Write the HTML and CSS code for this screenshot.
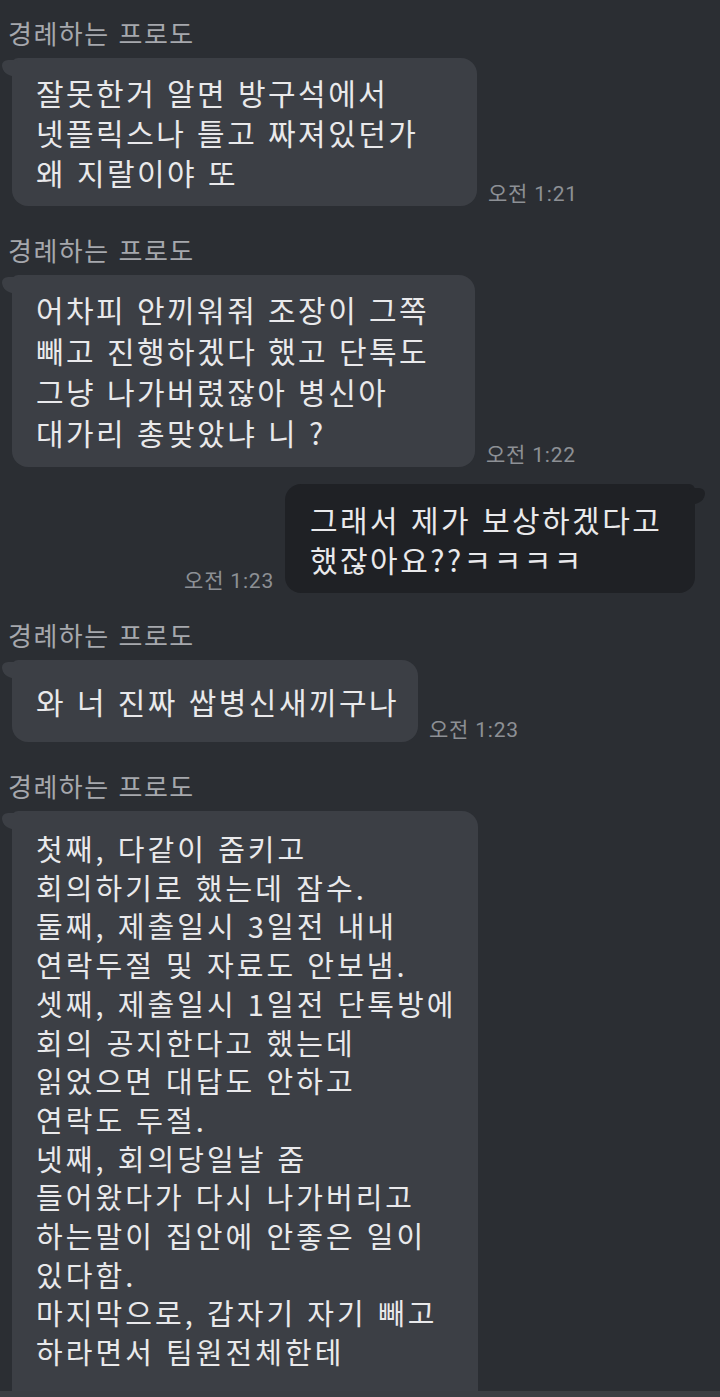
FILE: index.html
```html
<!DOCTYPE html>
<html lang="ko">
<head>
<meta charset="utf-8">
<title>채팅</title>
<link rel="stylesheet" href="styles.css">
</head>
<body>
<main class="chat">
  <section class="group first">
    <div class="name">경례하는 프로도</div>
    <div class="row">
      <div class="bubble recv w1">잘못한거 알면 방구석에서<br>넷플릭스나 틀고 짜져있던가<br>왜 지랄이야 또</div>
      <span class="time">오전 1:21</span>
    </div>
  </section>

  <section class="group">
    <div class="name">경례하는 프로도</div>
    <div class="row">
      <div class="bubble recv four w2">어차피 안끼워줘 조장이 그쪽<br>빼고 진행하겠다 했고 단톡도<br>그냥 나가버렸잖아 병신아<br>대가리 총맞았냐 니 ?</div>
      <span class="time">오전 1:22</span>
    </div>
  </section>

  <section class="group sent-group">
    <div class="row mine">
      <span class="time">오전 1:23</span>
      <div class="bubble sent">그래서 제가 보상하겠다고<br>했잖아요??ㅋㅋㅋㅋ</div>
    </div>
  </section>

  <section class="group">
    <div class="name">경례하는 프로도</div>
    <div class="row">
      <div class="bubble recv single w3">와 너 진짜 쌉병신새끼구나</div>
      <span class="time">오전 1:23</span>
    </div>
  </section>

  <section class="group last">
    <div class="name">경례하는 프로도</div>
    <div class="row">
      <div class="bubble recv long w4">첫째, 다같이 줌키고<br>회의하기로 했는데 잠수.<br>둘째, 제출일시 3일전 내내<br>연락두절 및 자료도 안보냄.<br>셋째, 제출일시 1일전 단톡방에<br>회의 공지한다고 했는데<br>읽었으면 대답도 안하고<br>연락도 두절.<br>넷째, 회의당일날 줌<br>들어왔다가 다시 나가버리고<br>하는말이 집안에 안좋은 일이<br>있다함.<br>마지막으로, 갑자기 자기 빼고<br>하라면서 팀원전체한테</div>
    </div>
  </section>
</main>
<div class="bottom-band"></div>
</body>
</html>
```

FILE: styles.css
```css
html, body {
  margin: 0;
  padding: 0;
}

body {
  width: 720px;
  height: 1397px;
  overflow: hidden;
  background: #2b2e33;
  font-family: "Noto Sans CJK KR", "Noto Sans", sans-serif;
  color: #e9e9eb;
  display: flex;
  flex-direction: column;
}

.chat {
  flex: 1;
  display: flex;
  flex-direction: column;
  overflow: hidden;
  padding-top: 18px;
}

.group {
  display: flex;
  flex-direction: column;
  margin-top: 29px;
}

.group.first {
  margin-top: 0;
}

.group.sent-group {
  margin-top: 17px;
}

.group.sent-group + .group {
  margin-top: 27px;
}

.name {
  font-size: 26px;
  line-height: 30px;
  height: 30px;
  color: #a6a8ad;
  padding-left: 8px;
  margin-bottom: 10px;
  letter-spacing: 1.5px;
}

.row {
  display: flex;
  align-items: flex-end;
  gap: 11px;
  padding-left: 12px;
}

.row.mine {
  justify-content: flex-end;
  padding-left: 0;
  padding-right: 25px;
}

.bubble {
  position: relative;
  box-sizing: border-box;
  font-size: 30px;
  letter-spacing: 2.45px;
  line-height: 40px;
  padding: 14px 14px 14px 24px;
  border-radius: 16px;
  white-space: nowrap;
}

.bubble.recv {
  background: #3c3f45;
  border-top-left-radius: 6px;
}

.bubble.recv::before {
  content: "";
  position: absolute;
  left: -10px;
  top: 2px;
  width: 16px;
  height: 16px;
  background: #3c3f45;
  border-radius: 8px 2px 0 16px / 7px 2px 0 14px;
}

.bubble.four {
  line-height: 41px;
}

.bubble.sent {
  background: #1f2125;
  width: 410px;
  padding: 15px 10px 14px 25px;
  border-top-right-radius: 6px;
}

.bubble.sent::after {
  content: "";
  position: absolute;
  right: -10px;
  top: 4px;
  width: 16px;
  height: 16px;
  background: #1f2125;
  border-radius: 2px 8px 16px 0 / 2px 7px 14px 0;
}

.bubble.single {
  padding-top: 21px;
  padding-bottom: 21px;
}

.w1 { width: 465px; }
.w2 { width: 463px; }
.w3 { width: 406px; }
.w4 { width: 466px; }

.bubble.long {
  font-size: 29px;
  letter-spacing: 3.05px;
  line-height: 38.7px;
  padding-top: 18px;
  padding-bottom: 30px;
  border-bottom-left-radius: 0;
  border-bottom-right-radius: 0;
}

.time {
  font-family: "Roboto", "Noto Sans CJK KR", sans-serif;
  font-size: 21px;
  letter-spacing: 0.8px;
  line-height: 24px;
  color: #8d9095;
  white-space: nowrap;
  flex: none;
}

.bottom-band {
  height: 6px;
  flex: none;
  background: #3b3e43;
}
```
